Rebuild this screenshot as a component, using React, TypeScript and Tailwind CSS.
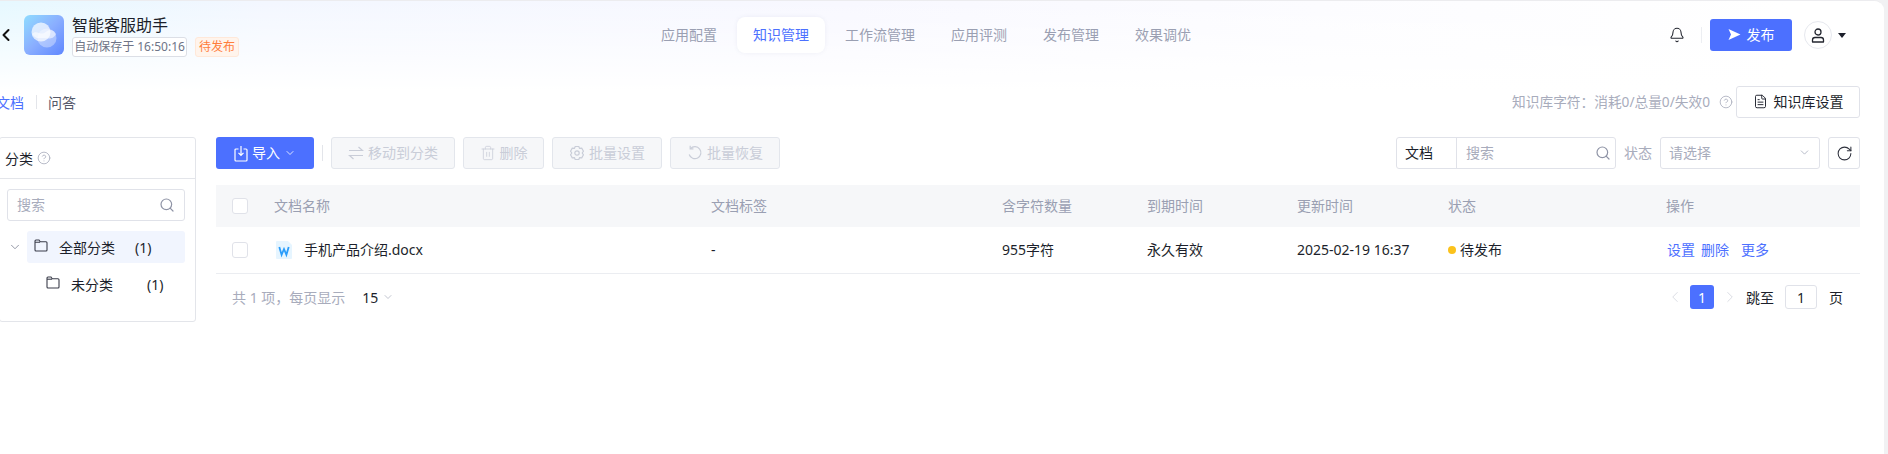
import React from "react";
import { Bell, ChevronDown, ChevronLeft, ChevronRight, Search, FileText, CircleHelp, Trash2, RotateCw } from "lucide-react";

const FONT = "[font-family:'Noto_Sans','Noto_Sans_CJK_SC','Liberation_Sans',sans-serif]";

function Logo() {
  return (
    <div className="w-10 h-10 rounded-[6px] bg-gradient-to-br from-[#8fdcff] via-[#8aaeff] to-[#5f86ff] flex items-center justify-center shrink-0">
      <svg width="32" height="32" viewBox="0 0 32 32">
        <circle cx="13" cy="13" r="9.5" fill="#ffffff" fillOpacity="0.7" />
        <circle cx="19" cy="19" r="9.5" fill="#ffffff" fillOpacity="0.35" />
        <path d="M4 15 C8 10 13 17 17 13.5 C21 10 25 10 28 15 C25 21 20 19.5 16 19 C11 18.5 8 21 4 15Z" fill="#ffffff" fillOpacity="0.55" />
      </svg>
    </div>
  );
}

const FolderIcon = () => (
  <svg width="14" height="13" viewBox="0 0 14 13" fill="none" stroke="currentColor" strokeWidth="1.1" className="mr-[11px] shrink-0 -mt-[3px] text-[#3a3d4a]">
    <path d="M1 3V2Q1 1 2 1H5L6.2 2.8H12Q13 2.8 13 3.8V11Q13 12 12 12H2Q1 12 1 11Z" />
    <path d="M1 3.2H6" />
  </svg>
);

const ImportIcon = () => (
  <svg width="14" height="17" viewBox="0 0 14 17" fill="none" stroke="currentColor" strokeWidth="1.2">
    <path d="M4.5 4H2Q1 4 1 5V15Q1 16 2 16H12Q13 16 13 15V5Q13 4 12 4H9.5" />
    <path d="M7 1V10M4.5 7.8L7 10.4L9.5 7.8" />
  </svg>
);

const SwapIcon = () => (
  <svg width="16" height="14" viewBox="0 0 16 14" fill="none" stroke="currentColor" strokeWidth="1.2">
    <path d="M1 4.5H14.5L10.5 1" />
    <path d="M15 9.5H1.5L5.5 13" />
  </svg>
);

const GearIcon = () => (
  <svg width="16" height="16" viewBox="0 0 16 16" fill="none" stroke="currentColor" strokeWidth="1.2">
    <path d="M6.2 1.5H9.8L10.6 3.4L12.7 3.1L14.5 6.2L13.2 8L14.5 9.8L12.7 12.9L10.6 12.6L9.8 14.5H6.2L5.4 12.6L3.3 12.9L1.5 9.8L2.8 8L1.5 6.2L3.3 3.1L5.4 3.4Z" strokeLinejoin="round" />
    <circle cx="8" cy="8" r="2.2" />
  </svg>
);

const RestoreIcon = () => (
  <svg width="16" height="16" viewBox="0 0 16 16" fill="none" stroke="currentColor" strokeWidth="1.2">
    <path d="M3.5 3.6A6 6 0 1 1 2.2 9.5" />
    <path d="M3.2 0.8V3.9H6.4" />
  </svg>
);

const UserIcon = () => (
  <svg width="14" height="15" viewBox="0 0 14 15" fill="none" stroke="#23262f" strokeWidth="1.3">
    <circle cx="7" cy="4" r="3" />
    <path d="M1.5 14V12Q1.5 9.5 4 9.5H10Q12.5 9.5 12.5 12V14Z" strokeLinejoin="round" />
  </svg>
);

function ToolBtn({ icon, label, w }: { icon: React.ReactNode; label: string; w: string }) {
  return (
    <button className={`h-8 ${w} shrink-0 flex items-center justify-center gap-1 rounded-[3px] border border-[#e3e6ec] bg-[#f6f7f9] text-[14px] text-[#c9cdd8]`}>
      {icon}
      <span className="-mt-[2px]">{label}</span>
    </button>
  );
}

function Tab({ label, active, w }: { label: string; active?: boolean; w: string }) {
  return (
    <div className={`h-9 ${w} pb-[2px] flex items-center justify-center rounded-[8px] text-[14px] ${active ? "bg-white text-[#4c70ff] shadow-[0_0_4px_rgba(80,90,140,0.08)]" : "text-[#9a9fb2]"}`}>
      {label}
    </div>
  );
}

export default function App() {
  return (
    <div className={`${FONT} w-[1888px] h-[454px] overflow-hidden bg-[#f1f1f3] text-[14px] text-[#1c1f2b]`}>
      <div className="w-[1884px] h-[454px] bg-white rounded-tr-[10px] border-t border-t-[#ececef] overflow-hidden">
        <div className="h-[90px] -mb-[90px] bg-[linear-gradient(to_bottom,rgba(255,255,255,0)_0%,#ffffff_100%),linear-gradient(to_right,#e6f8ff_0%,#f3f7ff_14%,#f8f8ff_45%,#fcfcff_70%,#ffffff_95%)]" />
        {/* header */}
        <header className="relative h-[68px] flex items-center pr-[38px]">
          <ChevronLeft size={20} strokeWidth={2.4} className="-ml-[4px] mr-[8px] shrink-0 text-[#111]" />
          <Logo />
          <div className="ml-2 w-[200px] shrink-0 pt-[1px]">
            <div className="text-[16px] leading-[20px] text-[#1c1f2b] whitespace-nowrap">智能客服助手</div>
            <div className="flex items-center gap-2 mt-[2px]">
              <span className="h-5 w-[115px] flex items-center justify-center rounded-[3px] border border-[#dcdfe6] bg-white text-[12px] text-[#6e7487] whitespace-nowrap">自动保存于 16:50:16</span>
              <span className="h-5 w-[44px] flex items-center justify-center rounded-[3px] border border-[#ffe8d9] bg-[#fff4ec] text-[12px] text-[#ff7d3b] whitespace-nowrap">待发布</span>
            </div>
          </div>
          <nav className="ml-[373px] flex items-center gap-1">
            <Tab label="应用配置" w="w-[88px]" />
            <Tab label="知识管理" w="w-[88px]" active />
            <Tab label="工作流管理" w="w-[102px]" />
            <Tab label="应用评测" w="w-[88px]" />
            <Tab label="发布管理" w="w-[88px]" />
            <Tab label="效果调优" w="w-[88px]" />
          </nav>
          <div className="ml-auto flex items-center">
            <Bell size={16} strokeWidth={1.6} className="text-[#23262f]" />
            <div className="w-px h-4 bg-[#eceef2] ml-[16px] mr-[8px]" />
            <button className="w-[82px] h-8 pb-[2px] rounded-[3px] bg-[#4c70ff] text-white flex items-center justify-center gap-1.5 text-[14px]">
              <svg width="13" height="13" viewBox="0 0 13 13"><path d="M0.5 1 L12.5 6.5 L0.5 12 L3 6.5Z" fill="#fff" /></svg>
              发布
            </button>
            <div className="ml-3 w-7 h-7 rounded-full border border-[#e6e8ee] bg-white flex items-center justify-center">
              <UserIcon />
            </div>
            <svg className="ml-1.5" width="8" height="5" viewBox="0 0 8 5"><path d="M0 0H8L4 5Z" fill="#1c1f2b" /></svg>
          </div>
        </header>
        {/* sub header */}
        <div className="relative h-[50px] flex items-center pr-[24px] mt-[8px]">
          <span className="text-[#4c70ff] -ml-[4px]">文档</span>
          <div className="w-px h-[14px] bg-[#e3e5ea] ml-[12px] mr-[11px]" />
          <span className="text-[#55596a]">问答</span>
          <span className="ml-auto text-[13.7px] text-[#a8acbc] whitespace-nowrap">知识库字符：消耗0/总量0/失效0</span>
          <CircleHelp size={14} strokeWidth={1.4} className="ml-[9px] mr-[3px] text-[#a8acbc]" />
          <button className="w-[124px] h-8 pb-[2px] rounded-[3px] border border-[#e0e2e9] bg-white flex items-center justify-center gap-1.5 text-[14px]">
            <FileText size={15} strokeWidth={1.5} />
            知识库设置
          </button>
        </div>
        {/* body */}
        <div className="flex items-start pr-[24px] mt-[10px]">
          <aside className="w-[197px] -ml-[1px] h-[185px] shrink-0 rounded-[3px] border border-[#e3e5ea] bg-white">
            <div className="h-[41px] border-b border-b-[#e3e5ea] flex items-center pl-[5px] gap-1">
              <span>分类</span>
              <CircleHelp size={14} strokeWidth={1.4} className="text-[#a8acbc]" />
            </div>
            <div className="ml-[7px] mt-[10px] w-[178px] h-8 pb-[1px] rounded-[3px] border border-[#e0e2e9] flex items-center px-[9px] text-[#a8acbc] justify-between">
              搜索
              <Search size={16} strokeWidth={1.8} className="text-[#8f94a6]" />
            </div>
            <div className="mt-[10px] ml-[8px] flex items-center">
              <ChevronDown size={14} strokeWidth={1.4} className="text-[#7d8293] mr-[5px] shrink-0" />
              <div className="w-[158px] h-8 rounded-[3px] bg-[#f1f5fe] flex items-center pl-[7px]">
                <FolderIcon />
                <span className="w-[76px]">全部分类</span>
                <span>(1)</span>
              </div>
            </div>
            <div className="mt-[5px] ml-[46px] h-8 flex items-center">
              <FolderIcon />
              <span className="w-[76px]">未分类</span>
              <span>(1)</span>
            </div>
          </aside>
          <main className="ml-[20px] flex-1 min-w-0">
            <div className="flex items-center h-8">
              <button className="w-[98px] h-8 rounded-[3px] bg-[#4c70ff] text-white flex items-center justify-center gap-1 text-[14px]">
                <ImportIcon />
                <span className="-mt-[2px]">导入</span>
                <ChevronDown size={12} strokeWidth={1.6} />
              </button>
              <div className="w-px h-4 bg-[#e3e5ea] mx-[8px]" />
              <div className="flex items-center gap-2">
                <ToolBtn w="w-[124px]" icon={<SwapIcon />} label="移动到分类" />
                <ToolBtn w="w-[81px]" icon={<Trash2 size={16} strokeWidth={1.2} />} label="删除" />
                <ToolBtn w="w-[110px]" icon={<GearIcon />} label="批量设置" />
                <ToolBtn w="w-[110px]" icon={<RestoreIcon />} label="批量恢复" />
              </div>
              <div className="ml-auto flex items-center">
                <div className="w-[220px] h-8 rounded-[3px] border border-[#e0e2e9] flex items-center">
                  <span className="w-[60px] h-full pb-[2px] flex items-center pl-[8px] border-r border-r-[#e0e2e9]">文档</span>
                  <span className="flex-1 pl-[9px] pb-[2px] text-[#a8acbc]">搜索</span>
                  <Search size={16} strokeWidth={1.8} className="text-[#8f94a6] mr-[4px]" />
                </div>
                <span className="ml-[8px] pb-[2px] text-[#a8acbc]">状态</span>
                <div className="ml-2 w-[160px] h-8 pb-[2px] rounded-[3px] border border-[#e0e2e9] flex items-center justify-between px-[8px] text-[#a8acbc]">
                  请选择
                  <ChevronDown size={13} strokeWidth={1.5} className="text-[#a8acbc]" />
                </div>
                <div className="ml-2 w-8 h-8 rounded-[3px] border border-[#e0e2e9] flex items-center justify-center">
                  <RotateCw size={17} strokeWidth={1.5} className="text-[#2f323e]" />
                </div>
              </div>
            </div>
            {/* table */}
            <div className="mt-4 grid grid-cols-[58px_437px_291px_145px_150px_151px_218px_194px] border-b border-b-[#ebedf1]">
              <div className="h-[42px] bg-[#f6f7f9] flex items-center pl-4"><span className="w-4 h-4 rounded-[3px] border border-[#e0e2e9] bg-white" /></div>
              {["文档名称", "文档标签", "含字符数量", "到期时间", "更新时间", "状态", "操作"].map((h) => (
                <div key={h} className="h-[42px] pb-[2px] bg-[#f6f7f9] flex items-center text-[#9a9fb2]">{h}</div>
              ))}
              <div className="h-[46px] flex items-center pl-4"><span className="w-4 h-4 rounded-[3px] border border-[#e0e2e9] bg-white" /></div>
              <div className="h-[46px] flex items-center pl-[2px]">
                <svg width="16" height="18" viewBox="0 0 16 18" className="mr-3">
                  <path d="M1 0Q0 0 0 1V17Q0 18 1 18H15Q16 18 16 17V4L12 0Z" fill="#e6f5ff" />
                  <path d="M3.3 6L5.6 13.8L8 8L10.4 13.8L12.7 6" fill="none" stroke="#2a9dfb" strokeWidth="1.8" />
                </svg>
                <span className="-mt-[2px]">手机产品介绍.docx</span>
              </div>
              <div className="h-[46px] pb-[2px] flex items-center">-</div>
              <div className="h-[46px] pb-[2px] flex items-center">955字符</div>
              <div className="h-[46px] pb-[2px] flex items-center">永久有效</div>
              <div className="h-[46px] pb-[2px] flex items-center">2025-02-19 16:37</div>
              <div className="h-[46px] flex items-center"><span className="w-2 h-2 rounded-full bg-[#fbc21c] mr-1" /><span className="-mt-[2px]">待发布</span></div>
              <div className="h-[46px] pb-[2px] flex items-center text-[#4c70ff] pl-[1px]">
                <span>设置</span><span className="ml-[6px]">删除</span><span className="ml-[12px]">更多</span>
              </div>
            </div>
            {/* pagination */}
            <div className="mt-[8px] flex items-center h-[30px]">
              <span className="ml-4 text-[#a8acbc]">共 1 项，每页显示</span>
              <span className="ml-[17px]">15</span>
              <ChevronDown size={12} strokeWidth={1.4} className="ml-[4px] text-[#a8acbc]" />
              <div className="ml-auto flex items-center">
                <ChevronLeft size={18} strokeWidth={1.1} className="text-[#d3d6de]" />
                <span className="ml-[6px] w-6 h-6 rounded-[3px] bg-[#4c70ff] text-white flex items-center justify-center">1</span>
                <ChevronRight size={18} strokeWidth={1.1} className="ml-[7px] text-[#d3d6de]" />
                <span className="ml-[7px]">跳至</span>
                <span className="ml-[11px] w-8 h-6 rounded-[3px] border border-[#e0e2e9] flex items-center justify-center">1</span>
                <span className="ml-[12px] mr-[17px]">页</span>
              </div>
            </div>
          </main>
        </div>
      </div>
    </div>
  );
}
